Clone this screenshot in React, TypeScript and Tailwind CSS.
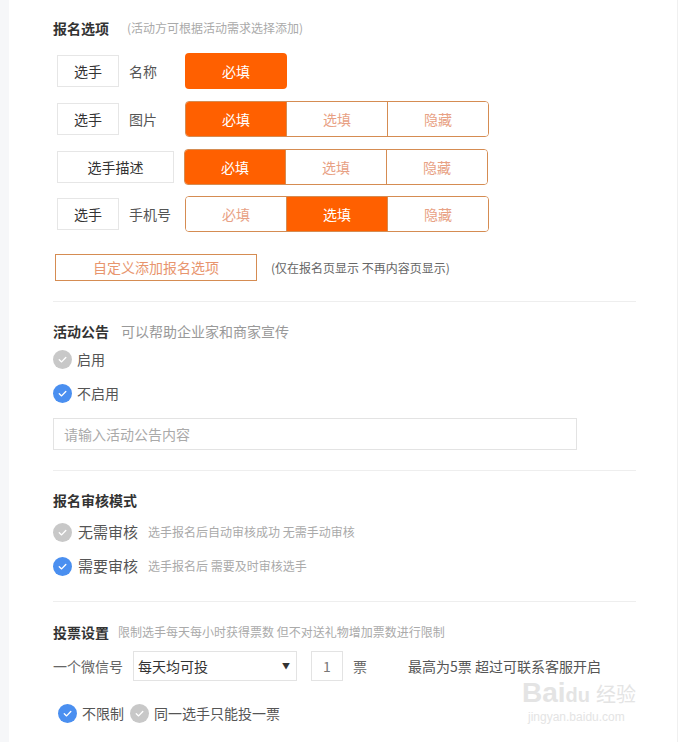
import React from "react";

const FONT = { fontFamily: '"Noto Sans CJK SC", "Noto Sans", sans-serif' };

function Check({ active, className = "" }: { active: boolean; className?: string }) {
    return (
        <span className={`inline-flex w-[19px] h-[19px] rounded-full items-center justify-center shrink-0 ${active ? "bg-[#4a8ff0]" : "bg-[#c8c8c8]"} ${className}`}>
            <svg width="11" height="11" viewBox="0 0 12 12" fill="none">
                <path d="M2.5 6.3 L5 8.6 L9.6 3.8" stroke="white" strokeWidth="1.5" strokeLinecap="round" strokeLinejoin="round" />
            </svg>
        </span>
    );
}

type Opt = "必填" | "选填" | "隐藏";

function Segmented({ selected, only }: { selected: Opt; only?: boolean }) {
    const opts: Opt[] = ["必填", "选填", "隐藏"];
    if (only) {
        return (
            <div className="w-[102px] h-[36px] rounded-[4px] bg-[#ff6000] text-white text-[14px] flex items-center justify-center">
                必填
            </div>
        );
    }
    return (
        <div className="flex h-[36px] w-[304px] rounded-[4px] border border-[#d58c52] overflow-hidden">
            {opts.map((o, i) => (
                <div
                    key={o}
                    className={`flex-1 flex items-center justify-center text-[14px] ${i > 0 ? "border-l border-[#d58c52]" : ""} ${o === selected ? "bg-[#ff6000] text-white" : "bg-white text-[#e8a184]"}`}
                >
                    {o}
                </div>
            ))}
        </div>
    );
}

function OptionRow({ box, label, selected, only, wide }: { box: string; label?: string; selected: Opt; only?: boolean; wide?: boolean }) {
    return (
        <div className="flex items-center h-[36px]">
            <div className={`ml-[4px] h-[32px] border border-[#e6e6e6] text-[14px] text-[#333] flex items-center justify-center ${wide ? "w-[117px]" : "w-[62px]"}`}>
                {box}
            </div>
            {label !== undefined ? (
                <div className="ml-[10px] w-[56px] text-[14px] text-[#555]">{label}</div>
            ) : (
                <div className="w-[10px]" />
            )}
            <Segmented selected={selected} only={only} />
        </div>
    );
}

function Divider() {
    return <div className="h-px w-[583px] bg-[#eeeeee]" />;
}

export default function App() {
    return (
        <div className="flex w-[680px] h-[742px] bg-white overflow-hidden" style={FONT}>
            <div className="w-[9px] bg-[#f6f7f9] shrink-0" />
            <div className="flex-1 pl-[44px] relative">
                {/* 报名选项 */}
                <div className="flex items-center h-[16px] mt-[20px]">
                    <span className="text-[14px] font-bold text-[#333]">报名选项</span>
                    <span className="ml-[18px] text-[12px] text-[#aaa]">(活动方可根据活动需求选择添加)</span>
                </div>
                <div className="flex flex-col gap-[12px] mt-[17px]">
                    <OptionRow box="选手" label="名称" selected="必填" only />
                    <OptionRow box="选手" label="图片" selected="必填" />
                    <OptionRow box="选手描述" selected="必填" wide />
                </div>
                <div className="mt-[11px]">
                    <OptionRow box="选手" label="手机号" selected="选填" />
                </div>
                <div className="flex items-center mt-[22px]">
                    <div className="ml-[2px] w-[202px] h-[27px] border border-[#d58c52] text-[#e8956e] text-[14px] flex items-center justify-center">
                        自定义添加报名选项
                    </div>
                    <span className="ml-[14px] text-[12px] text-[#666]">(仅在报名页显示 不再内容页显示)</span>
                </div>
                <div className="mt-[20px]">
                    <Divider />
                </div>

                {/* 活动公告 */}
                <div className="flex items-center h-[20px] mt-[19px]">
                    <span className="text-[14px] font-bold text-[#333]">活动公告</span>
                    <span className="ml-[12px] text-[14px] text-[#999]">可以帮助企业家和商家宣传</span>
                </div>
                <div className="flex items-center gap-[5px] h-[20px] mt-[8px] text-[14px] text-[#555]">
                    <Check active={false} />
                    启用
                </div>
                <div className="flex items-center gap-[5px] h-[20px] mt-[14px] text-[14px] text-[#555]">
                    <Check active />
                    不启用
                </div>
                <div className="mt-[15px] w-[524px] h-[32px] border border-[#e3e3e3] flex items-center pl-[10px] text-[14px] text-[#aaa]">
                    请输入活动公告内容
                </div>
                <div className="mt-[20px]">
                    <Divider />
                </div>

                {/* 报名审核模式 */}
                <div className="flex items-center h-[20px] mt-[19px]">
                    <span className="text-[14px] font-bold text-[#333]">报名审核模式</span>
                </div>
                <div className="flex items-center h-[20px] mt-[12px]">
                    <Check active={false} />
                    <span className="ml-[6px] text-[15px] text-[#555]">无需审核</span>
                    <span className="ml-[10px] text-[12px] text-[#aaa]">选手报名后自动审核成功 无需手动审核</span>
                </div>
                <div className="flex items-center h-[20px] mt-[14px]">
                    <Check active />
                    <span className="ml-[6px] text-[15px] text-[#555]">需要审核</span>
                    <span className="ml-[10px] text-[12px] text-[#aaa]">选手报名后 需要及时审核选手</span>
                </div>
                <div className="mt-[25px]">
                    <Divider />
                </div>

                {/* 投票设置 */}
                <div className="flex items-center h-[20px] mt-[20px]">
                    <span className="text-[14px] font-bold text-[#333]">投票设置</span>
                    <span className="ml-[9px] text-[12px] text-[#aaa]">限制选手每天每小时获得票数 但不对送礼物增加票数进行限制</span>
                </div>
                <div className="flex items-center h-[30px] mt-[9px]">
                    <span className="text-[14px] text-[#666] w-[80px]">一个微信号</span>
                    <div className="w-[164px] h-[30px] border border-[#e3e3e3] flex items-center justify-between pl-[4px] pr-[6px] text-[14px] text-[#333]">
                        每天均可投
                        <span className="text-[8px] text-[#333]">▼</span>
                    </div>
                    <div className="ml-[14px] w-[32px] h-[30px] border border-[#e3e3e3] flex items-center justify-center text-[14px] text-[#777]">
                        1
                    </div>
                    <span className="ml-[10px] text-[14px] text-[#666]">票</span>
                    <span className="ml-[41px] text-[14px] text-[#555]">最高为5票 超过可联系客服开启</span>
                </div>
                <div className="flex items-center h-[20px] mt-[22px] ml-[5px] text-[14px] text-[#555]">
                    <Check active />
                    <span className="ml-[5px]">不限制</span>
                    <Check active={false} className="ml-[6px]" />
                    <span className="ml-[5px]">同一选手只能投一票</span>
                </div>

                {/* watermark */}
                <div className="absolute left-[513px] top-[678px] flex flex-col items-start text-[#e4e4e4] pointer-events-none select-none whitespace-nowrap">
                    <div className="flex items-baseline gap-[6px]">
                        <span className="text-[28px] leading-[30px] font-bold" style={{ fontFamily: '"Liberation Sans", sans-serif' }}>
                            Bai<span className="text-[20px]">du</span>
                        </span>
                        <span className="text-[20px] leading-[30px]">经验</span>
                    </div>
                    <span className="text-[12px] leading-[14px] ml-[6px]" style={{ fontFamily: '"Liberation Sans", sans-serif' }}>jingyan.baidu.com</span>
                </div>
            </div>
            <div className="w-px bg-[#f0f0f0] shrink-0" />
            <div className="w-[2px] bg-white shrink-0" />
        </div>
    );
}
